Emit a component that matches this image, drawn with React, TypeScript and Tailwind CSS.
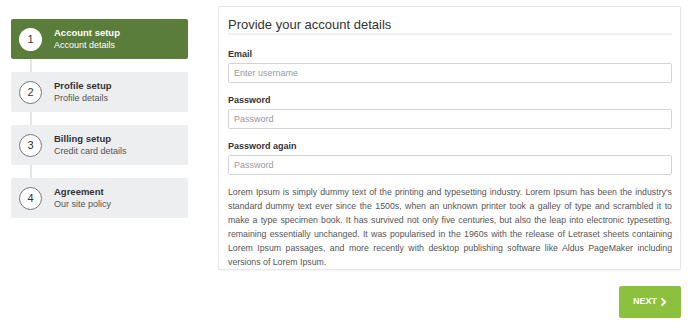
import React from "react";

const steps = [
  { n: 1, title: "Account setup", sub: "Account details" },
  { n: 2, title: "Profile setup", sub: "Profile details" },
  { n: 3, title: "Billing setup", sub: "Credit card details" },
  { n: 4, title: "Agreement", sub: "Our site policy" },
];

const lorem =
  "Lorem Ipsum is simply dummy text of the printing and typesetting industry. Lorem Ipsum has been the industry's standard dummy text ever since the 1500s, when an unknown printer took a galley of type and scrambled it to make a type specimen book. It has survived not only five centuries, but also the leap into electronic typesetting, remaining essentially unchanged. It was popularised in the 1960s with the release of Letraset sheets containing Lorem Ipsum passages, and more recently with desktop publishing software like Aldus PageMaker including versions of Lorem Ipsum.";

function Step({ n, title, sub, active }: { n: number; title: string; sub: string; active: boolean }) {
  return (
    <div
      className={
        "flex h-[40px] items-center rounded-[2px] pl-[8px] " +
        (active ? "bg-[#5b7d3b] text-white" : "bg-[#eceef0] text-[#333]")
      }
    >
      <div
        className={
          "flex h-[23px] w-[23px] shrink-0 items-center justify-center rounded-full bg-white text-[11px] text-[#333] " +
          (active ? "" : "border border-[#777]")
        }
      >
        {n}
      </div>
      <div className="ml-[12px] flex flex-col">
        <span className="text-[9.5px] font-bold leading-[12px]">{title}</span>
        <span className={"text-[9px] leading-[12px] " + (active ? "text-white" : "text-[#555]")}>{sub}</span>
      </div>
    </div>
  );
}

function Field({ label, placeholder }: { label: string; placeholder: string }) {
  return (
    <div className="flex flex-col">
      <label className="h-[12px] text-[9px] font-bold leading-[12px] text-[#333]">{label}</label>
      <input
        className="mt-[3px] h-[20px] rounded-[2px] border border-[#d4d4d4] px-[5px] text-[9px] text-[#555] placeholder:text-[#999] outline-none"
        placeholder={placeholder}
      />
    </div>
  );
}

export default function App() {
  return (
    <div className="min-h-[321px] w-[690px] bg-white font-['Liberation_Sans',Arial,sans-serif]">
      <div className="flex items-start pl-[11px]">
        <div className="mt-[19px] flex w-[177px] flex-col">
          {steps.map((s, i) => (
            <React.Fragment key={s.n}>
              {i > 0 && <div className="ml-[19px] h-[13px] w-[2px] bg-[#e3e5e7]" />}
              <Step {...s} active={i === 0} />
            </React.Fragment>
          ))}
        </div>

        <div className="ml-[30px] flex flex-col items-end">
          <div className="mt-[6px] w-[463px] rounded-[2px] border border-[#e6e6e6] pl-[9px] pr-[8px] pt-[10px] shadow-[0_1px_2px_rgba(0,0,0,0.05)]">
            <h2 className="border-b-2 border-[#f0f0f0] text-[13px] leading-[16px] text-[#333]">
              Provide your account details
            </h2>
            <div className="mt-[13px] flex flex-col gap-[11px]">
              <Field label="Email" placeholder="Enter username" />
              <Field label="Password" placeholder="Password" />
              <Field label="Password again" placeholder="Password" />
            </div>
            <p className="mt-[10px] text-justify text-[8.75px] leading-[14px] text-[#555]">{lorem}</p>
          </div>

          <button className="mt-[16px] flex h-[32px] w-[62px] items-center justify-center gap-[3px] rounded-[2px] bg-[#8cc03f] text-[9px] font-bold text-white">
            NEXT
            <svg width={7} height={8} viewBox="0 0 10 12" fill="none" stroke="currentColor" strokeWidth={3} strokeLinecap="square">
              <path d="M3 1.5l4.5 4.5L3 10.5" />
            </svg>
          </button>
        </div>
      </div>
    </div>
  );
}
